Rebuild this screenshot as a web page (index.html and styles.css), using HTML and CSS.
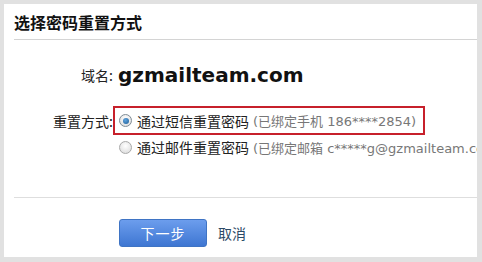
FILE: index.html
```html
<!DOCTYPE html>
<html>
<head>
<meta charset="utf-8">
<link rel="stylesheet" href="styles.css">
</head>
<body>
<div class="panel">
  <div class="title">选择密码重置方式</div>
  <div class="form">
    <div class="row domain-row">
      <span class="label">域名:</span>
      <span class="domain">gzmailteam.com</span>
    </div>
    <div class="row method-row">
      <span class="label">重置方式:</span>
      <div class="options">
        <label class="option selected">
          <span class="radio checked"></span>
          <span class="opt-text">通过短信重置密码</span>
          <span class="hint">(已绑定手机 186****2854)</span>
        </label>
        <label class="option">
          <span class="radio"></span>
          <span class="opt-text">通过邮件重置密码</span>
          <span class="hint">(已绑定邮箱 c*****g@gzmailteam.com)</span>
        </label>
      </div>
    </div>
  </div>
  <div class="actions">
    <button class="btn-primary">下一步</button>
    <a class="cancel">取消</a>
  </div>
</div>
</body>
</html>
```
FILE: styles.css
```css
html, body {
  margin: 0;
  padding: 0;
  background: #e1e1e1;
  font-family: "Noto Sans CJK SC", "DejaVu Sans", sans-serif;
}
.panel {
  margin: 4px 5px 5px 4px;
  height: 253px;
  background: #fff;
  padding-left: 10px;
  overflow: hidden;
  box-sizing: border-box;
}
.title {
  height: 35px;
  line-height: 36px;
  font-size: 16px;
  font-weight: bold;
  color: #111;
  border-bottom: 1px solid #d4d4d4;
}
.form {
  height: 158px;
  border-bottom: 1px solid #dedede;
  box-sizing: border-box;
  padding-top: 20px;
}
.row {
  display: flex;
  align-items: flex-start;
}
.label {
  width: 99px;
  text-align: right;
  font-size: 14px;
  color: #222;
  flex: none;
}
.domain-row {
  align-items: center;
  height: 30px;
}
.domain {
  margin-left: 5px;
  font-family: "DejaVu Sans", sans-serif;
  font-weight: bold;
  font-size: 20px;
  color: #111;
}
.method-row {
  margin-top: 16px;
}
.method-row .label {
  line-height: 24px;
  padding-top: 3px;
}
.options {
  display: flex;
  flex-direction: column;
  white-space: nowrap;
}
.option {
  display: flex;
  align-items: center;
  height: 24px;
  padding: 0 0 0 4px;
  border: 2px solid transparent;
  font-size: 14px;
  color: #222;
}
.option.selected {
  border-color: #c7202b;
  width: 304px;
  height: 25px;
}
.option + .option {
  margin-top: -2px;
}
.radio {
  width: 11px;
  height: 11px;
  border-radius: 50%;
  border: 1px solid #a9a9a9;
  background: radial-gradient(circle at 50% 35%, #fff, #d8d8d8);
  margin-right: 5px;
  flex: none;
  box-sizing: content-box;
  display: flex;
  align-items: center;
  justify-content: center;
}
.radio.checked {
  border-color: #7f8c96;
}
.radio.checked::after {
  content: "";
  width: 6px;
  height: 6px;
  border-radius: 50%;
  background: radial-gradient(circle at 40% 35%, #5fa4de, #1d5c95);
}
.opt-text {
  color: #222;
}
.hint {
  margin-left: 4px;
  font-size: 13px;
  color: #777;
  font-family: "DejaVu Sans", "Noto Sans CJK SC", sans-serif;
}
.actions {
  display: flex;
  align-items: center;
  padding-left: 105px;
  padding-top: 21px;
}
.btn-primary {
  width: 88px;
  height: 28px;
  border: 1px solid #3f74c4;
  border-radius: 3px;
  background: linear-gradient(#6c9ded, #3e76d2);
  color: #fff;
  font-family: "Noto Sans CJK SC", sans-serif;
  font-size: 14px;
  letter-spacing: 1px;
  padding: 0;
}
.cancel {
  margin-left: 11px;
  font-size: 14px;
  color: #2c4a66;
}
```
